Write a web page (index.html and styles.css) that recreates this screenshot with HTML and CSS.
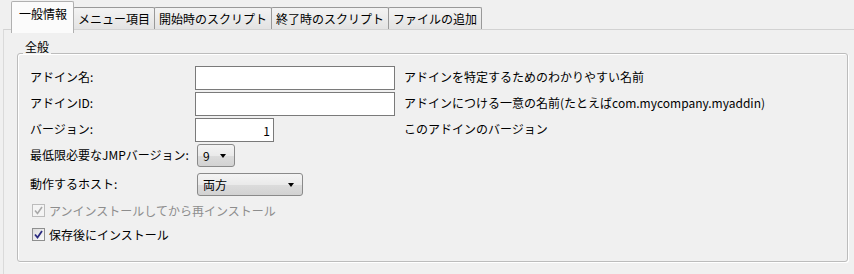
FILE: index.html
```html
<!DOCTYPE html>
<html lang="ja">
<head>
    <meta charset="UTF-8">
    <title>アドイン設定</title>
    <link rel="stylesheet" href="styles.css">
</head>
<body>
    <div class="tabs">
        <div class="tab active">一般情報</div>
        <div class="tab">メニュー項目</div>
        <div class="tab">開始時のスクリプト</div>
        <div class="tab">終了時のスクリプト</div>
        <div class="tab">ファイルの追加</div>
    </div>
    <div class="panel">
        <div class="group">
            <div class="caption">全般</div>

            <div class="row">
                <label class="name">アドイン名:</label>
                <div class="cell"><input type="text" class="field wide"></div>
                <span class="desc">アドインを特定するためのわかりやすい名前</span>
            </div>
            <div class="row">
                <label class="name">アドインID:</label>
                <div class="cell"><input type="text" class="field wide"></div>
                <span class="desc">アドインにつける一意の名前(たとえばcom.mycompany.myaddin)</span>
            </div>
            <div class="row">
                <label class="name">バージョン:</label>
                <div class="cell"><input type="text" class="field narrow" value="1"></div>
                <span class="desc">このアドインのバージョン</span>
            </div>
            <div class="row row-combo">
                <label class="name">最低限必要なJMPバージョン:</label>
                <div class="cell"><div class="combo small"><span>9</span><i class="arrow"></i></div></div>
            </div>
            <div class="row row-combo second">
                <label class="name">動作するホスト:</label>
                <div class="cell"><div class="combo large"><span>両方</span><i class="arrow"></i></div></div>
            </div>

            <div class="check disabled">
                <span class="box">
                    <svg width="9" height="9" viewBox="0 0 9 9"><path d="M1 4.5 L3.5 7.5 L8 1" fill="none" stroke="#a9a9a9" stroke-width="1.6"/></svg>
                </span>
                アンインストールしてから再インストール
            </div>
            <div class="check">
                <span class="box">
                    <svg width="9" height="9" viewBox="0 0 9 9"><path d="M1 4.5 L3.5 7.5 L8 1" fill="none" stroke="#2b2b80" stroke-width="1.8"/></svg>
                </span>
                保存後にインストール
            </div>
        </div>
    </div>
</body>
</html>
```

FILE: styles.css
```css
body {
    margin: 0;
    background-color: #f0f0f0;
    font-family: "Noto Sans CJK JP", "Noto Sans", sans-serif;
    font-size: 12px;
    color: #000;
    height: 274px;
    overflow: hidden;
}

.tabs {
    display: flex;
    align-items: flex-end;
    height: 24px;
    padding: 5px 0 0 11px;
}

.tab {
    height: 21px;
    line-height: 21px;
    padding: 0 4px;
    margin-right: -1px;
    border: 1px solid #999;
    border-bottom: none;
    border-radius: 2px 2px 0 0;
    background: linear-gradient(#f3f3f3, #e3e3e3);
    white-space: nowrap;
}

.tab.active {
    position: relative;
    z-index: 1;
    height: 27px;
    margin-bottom: -4px;
    padding: 0 6px 4px 7px;
    line-height: 24px;
    border-color: #b0b0b0;
    background: #fbfbfb;
}

.panel {
    box-sizing: border-box;
    height: 245px;
    margin-left: 3px;
    border-top: 1px solid #d2d2d2;
    border-left: 1px solid #dadada;
    padding: 23px 6px 0 13px;
}

.group {
    box-sizing: border-box;
    height: 209px;
    padding: 0 0 0 12px;
    border: 1px solid #bcbcbc;
    border-radius: 3px;
    box-shadow: 1px 1px 0 #fff, inset 1px 1px 0 #fff;
}

.caption {
    display: table;
    margin: -14px 0 12px -7px;
    padding: 0 2px;
    line-height: 14px;
    background: #f0f0f0;
}

.row {
    display: flex;
    align-items: flex-start;
    height: 24px;
    margin-bottom: 2px;
}

.name {
    width: 165px;
    padding-top: 2px;
    white-space: nowrap;
}

.cell {
    width: 209px;
}

.desc {
    padding-top: 2px;
    white-space: nowrap;
}

.field {
    box-sizing: border-box;
    height: 24px;
    margin: 0;
    border: 1px solid #7a7a7a;
    background: #fff;
    font: inherit;
    padding: 0 3px;
}

.field.wide { width: 200px; }
.field.narrow { width: 79px; text-align: right; }

.row-combo {
    height: 23px;
    margin-top: 2px;
    margin-bottom: 0;
}

.row-combo.second {
    margin-top: 6px;
}

.combo {
    box-sizing: border-box;
    display: flex;
    align-items: center;
    justify-content: space-between;
    height: 23px;
    margin-left: 2px;
    padding: 0 8px 0 5px;
    border: 1px solid #8a8a8a;
    border-radius: 3px;
    background: linear-gradient(#f4f4f4 0%, #eaeaea 50%, #dcdcdc 51%, #d2d2d2 100%);
}

.combo.small { width: 38px; }
.combo.large { width: 106px; }

.arrow {
    width: 0;
    height: 0;
    border-left: 3.5px solid transparent;
    border-right: 3.5px solid transparent;
    border-top: 4px solid #000;
}

.check {
    display: flex;
    align-items: center;
    gap: 4px;
    height: 18px;
    margin-left: 2px;
    white-space: nowrap;
}

.check.disabled {
    margin-top: 5px;
    color: #8d8d8d;
}

.check + .check {
    margin-top: 6px;
}

.box {
    box-sizing: border-box;
    display: flex;
    align-items: center;
    justify-content: center;
    width: 13px;
    height: 13px;
    border: 1px solid #8e8f8f;
    background: linear-gradient(135deg, #dcdcdc, #fafafa);
}

.check.disabled .box {
    border-color: #bcbcbc;
    background: #f4f4f4;
}
```
